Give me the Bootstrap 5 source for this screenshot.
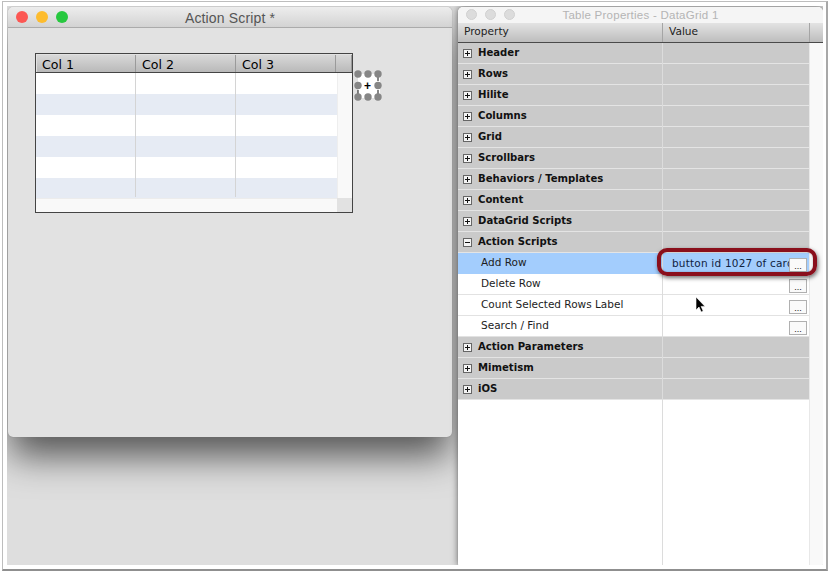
<!DOCTYPE html>
<html lang="en">
<head>
<meta charset="utf-8">
<title>Action Script</title>
<link href="https://cdn.jsdelivr.net/npm/bootstrap@5.3.0/dist/css/bootstrap.min.css" rel="stylesheet">
<style>
html,body{margin:0;padding:0;background:#fff;width:831px;height:574px;overflow:hidden}
.shot{width:826px;height:570px;margin:1px 0 0 2px;border:1px solid #bdbdbd;border-bottom:2px solid #8f8f8f;border-right:2px solid #a8a8a8;background:#fff;padding:4px 3px 4px 4px;box-sizing:border-box}
.desk{position:relative;width:100%;height:100%;background:#dedede;overflow:hidden}
.win{position:absolute;display:flex;flex-direction:column;overflow:hidden}
.win-a{left:1px;top:1px;width:444px;height:430px;background:#e2e2e2;border-radius:5px;box-shadow:0 0 1px #777,0 22px 36px -3px rgba(0,0,0,.62)}
.win-b{left:451px;top:1px;width:365px;height:559px;background:#fff;border-radius:5px 5px 3px 3px;box-shadow:0 0 1px #777,0 0 7px rgba(0,0,0,.55)}
.bar-a{height:21px;flex:none;background:linear-gradient(#ededed,#d3d3d3);border-bottom:1px solid #ababab;position:relative;font:14px/22px "Liberation Sans",sans-serif;color:#555;text-align:center;letter-spacing:.15px}
.bar-b{height:16px;flex:none;background:#f5f5f5;position:relative;font:11.5px/16px "Liberation Sans",sans-serif;color:#b4b4b4;text-align:center;letter-spacing:.25px}
.lights{position:absolute;left:8px;top:4px;gap:8px}
.lights i{display:block;width:12px;height:12px;border-radius:50%}
.lights-b{left:8px;top:2px;gap:8px}
.lights-b i{width:11px;height:11px;background:#dcdcdc;border:1px solid #d0d0d0}
.grid-a{margin:25px 0 0 27px;width:318px;height:160px;border:1px solid #444;background:#e2e2e2;flex:none;display:flex;flex-direction:column;position:relative}
.head-a{height:19px;flex:none;display:flex;padding:1px 0 0 1px;border-bottom:1px solid #444}
.head-a span{display:block;height:17px;width:100px;padding-left:6px;background:linear-gradient(#d8d8d8,#b9b9b9);border-right:1px solid #9a9a9a;font:12.6px/19px "DejaVu Sans",sans-serif;color:#000;overflow:hidden}
.head-a span:first-child{width:99px;padding-left:5px}
.head-a span:last-child{flex:1;padding:0}
.body-a{height:125px;flex:none;display:flex}
.rows-a{width:301px;flex:none;position:relative;overflow:hidden;background:#fff}
.rows-a>div{height:21px;background:#fff}
.rows-a>div:nth-child(even){background:#e6ebf4}
.rows-a>div:last-child{height:20px}
.rows-a::before,.rows-a::after{content:"";position:absolute;top:0;bottom:1px;width:1px;background:#d4d4d4}
.rows-a::before{left:99px}
.rows-a::after{left:199px}
.sb-v{flex:1;background:#f9f9f9;border-left:1px solid #eee}
.foot-a{flex:1;display:flex}
.foot-a b{display:block;width:301px;background:#f9f9f9;border-top:1px solid #ececec}
.handles{position:absolute;left:346px;top:62px}
.handle-text{font:bold 12px "Liberation Sans",sans-serif;fill:#000}
.head-b{height:20px;flex:none;display:flex;background:linear-gradient(#e3e3e3,#bdbdbd);border-bottom:1px solid #4a4a4a;font:10.6px/16px "DejaVu Sans",sans-serif;color:#222}
.head-b span{display:block;border-right:1px solid #a5a5a5;padding-left:6px}
.head-b span:nth-child(1){width:205px}
.head-b span:nth-child(2){width:147px}
.head-b span:nth-child(3){flex:1;border:0}
.body-b{flex:1;display:flex;min-height:0}
.rows-b{width:351px;flex:none;position:relative;background:#fff}
.rows-b::after{content:"";position:absolute;left:204px;top:0;bottom:0;width:1px;background:#dcdcdc}
.sb-b{flex:1;background:#f9f9f9;border-left:1px solid #e8e8e8}
.prow{height:21px;display:flex;align-items:center;background:#cacaca;border-bottom:1px solid #e4e4e4;font:bold 10.1px/20px "DejaVu Sans",sans-serif;color:#111;padding-left:5px;position:relative}
.pbox{width:9px;height:9px;border:1px solid #666;background:#f4f4f4;margin-right:6px;flex:none;position:relative}
.pbox::before{content:"";position:absolute;left:1px;right:1px;top:3px;height:1px;background:#111}
.pbox.plus::after{content:"";position:absolute;top:1px;bottom:1px;left:3px;width:1px;background:#111}
.crow{height:21px;display:flex;align-items:center;background:#fff;border-bottom:1px solid #e2e2e2;font:10.5px/20px "DejaVu Sans",sans-serif;color:#1c1c1c;padding:0 0 2px 23px;position:relative}
.crow.sel{background:#a3cdfd;border-bottom-color:#a3cdfd}
.dots{position:absolute;left:331px;top:5px;width:18px;height:14px;background:#fafafa;border:1px solid #b0b0b0;font:9px/14px "Liberation Sans",sans-serif;text-align:center;color:#111;z-index:2}
.val{position:absolute;left:214px;top:0;width:118px;overflow:hidden;white-space:nowrap;z-index:2;color:#10233f;letter-spacing:.2px}
.callout{position:absolute;left:199px;top:-5px;width:160px;height:28px;border:4px solid #8a0f1c;border-radius:10px;box-shadow:1px 2px 4px rgba(0,0,0,.55),inset 0 0 2px rgba(0,0,0,.3);z-index:3;pointer-events:none}
.cursor{position:absolute;left:237px;top:1px;z-index:3}
</style>
</head>
<body>
<div class="shot">
  <div class="desk">
    <section class="win win-a">
      <div class="bar-a">Action Script *
        <div class="lights d-flex"><i style="background:#fc5753"></i><i style="background:#fdbc2e"></i><i style="background:#27c83f"></i></div>
      </div>
      <div class="grid-a">
        <div class="head-a"><span>Col 1</span><span>Col 2</span><span>Col 3</span><span></span></div>
        <div class="body-a">
          <div class="rows-a"><div></div><div></div><div></div><div></div><div></div><div></div></div>
          <div class="sb-v"></div>
        </div>
        <div class="foot-a"><b></b></div>
      </div>
      <svg class="handles" width="30" height="34" viewBox="0 0 30 34">
        <rect x="4" y="5" width="22" height="24" fill="#fff"/>
        <path d="M4 21v4M24 21v4M24 8v4" stroke="#111"/>
        <g fill="#868686">
          <circle cx="4" cy="5" r="3.7"/><circle cx="14" cy="5" r="3.7"/><circle cx="24" cy="5" r="3.7"/>
          <circle cx="4" cy="16.5" r="3.7"/><circle cx="24" cy="16.5" r="3.7"/>
          <circle cx="4" cy="28" r="3.7"/><circle cx="14" cy="28" r="3.7"/><circle cx="24" cy="28" r="3.7"/>
        </g>
        <text class="handle-text" x="13.5" y="21" text-anchor="middle">+</text>
      </svg>
    </section>
    <section class="win win-b">
      <div class="bar-b">Table Properties - DataGrid 1
        <div class="lights lights-b d-flex"><i></i><i></i><i></i></div>
      </div>
      <div class="head-b"><span>Property</span><span>Value</span><span></span></div>
      <div class="body-b">
        <div class="rows-b">
          <div class="prow"><i class="pbox plus"></i>Header</div>
          <div class="prow"><i class="pbox plus"></i>Rows</div>
          <div class="prow"><i class="pbox plus"></i>Hilite</div>
          <div class="prow"><i class="pbox plus"></i>Columns</div>
          <div class="prow"><i class="pbox plus"></i>Grid</div>
          <div class="prow"><i class="pbox plus"></i>Scrollbars</div>
          <div class="prow"><i class="pbox plus"></i>Behaviors / Templates</div>
          <div class="prow"><i class="pbox plus"></i>Content</div>
          <div class="prow"><i class="pbox plus"></i>DataGrid Scripts</div>
          <div class="prow"><i class="pbox"></i>Action Scripts</div>
          <div class="crow sel">Add Row<span class="val">button id 1027 of card</span><span class="dots">...</span><span class="callout"></span></div>
          <div class="crow">Delete Row<span class="dots">...</span></div>
          <div class="crow">Count Selected Rows Label<span class="dots">...</span>
            <svg class="cursor" width="12" height="17" viewBox="0 0 12 17"><path d="M1 1v13l3-3 2.2 5 2-1-2.1-4.6H10z" fill="#000" stroke="#fff" stroke-width=".6"/></svg>
          </div>
          <div class="crow">Search / Find<span class="dots">...</span></div>
          <div class="prow"><i class="pbox plus"></i>Action Parameters</div>
          <div class="prow"><i class="pbox plus"></i>Mimetism</div>
          <div class="prow"><i class="pbox plus"></i>iOS</div>
        </div>
        <div class="sb-b"></div>
      </div>
    </section>
  </div>
</div>
<script src="https://cdn.jsdelivr.net/npm/bootstrap@5.3.0/dist/js/bootstrap.bundle.min.js"></script>
</body>
</html>
